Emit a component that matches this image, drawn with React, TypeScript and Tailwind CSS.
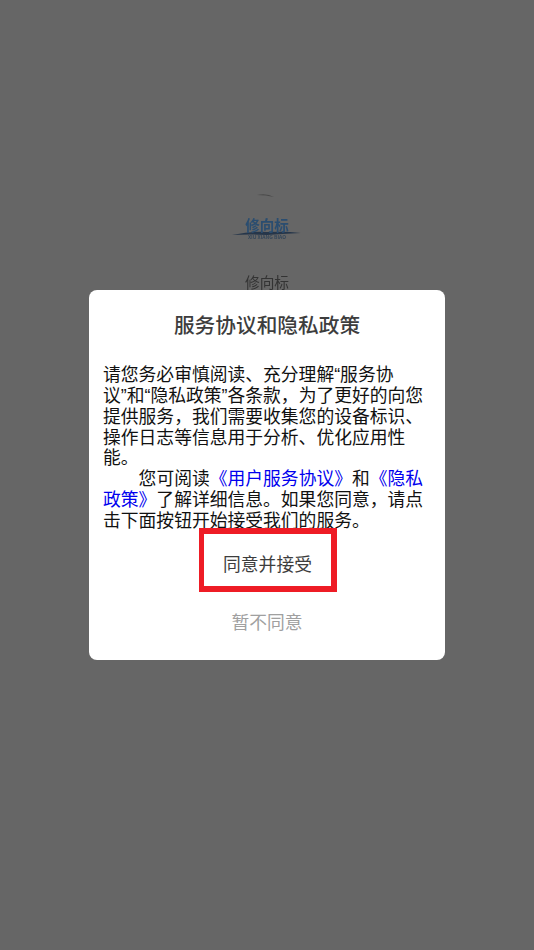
const Q = ({ children }: { children: string }) => (
  <span className="font-['Liberation_Sans']">{children}</span>
);

const Line = ({ children }: { children: React.ReactNode }) => (
  <span className="block h-[20.85px] leading-[20.85px]">{children}</span>
);

export default function App() {
  return (
    <div
      className="relative h-[950px] w-[534px] overflow-hidden bg-[#666666]"
      style={{ fontFamily: '"Noto Sans CJK SC", "Liberation Sans", sans-serif' }}
    >
      {/* Dimmed splash content */}
      <div className="flex flex-col items-center pt-[192px]">
        <svg width="72" height="50" viewBox="0 0 72 50" className="blur-[0.5px]">
          <path d="M26 3 Q36 1 43 5 Q35 3 26 3Z" fill="#4a4a4a" />
          <path d="M1 43 Q20 39 36 40 Q54 39 70 41 Q50 42 36 43 Q18 42 1 43Z" fill="#26364a" />
        </svg>
        <span className="mt-[-25px] text-[14.5px] font-bold leading-[15px] text-[#2a4d70] blur-[0.7px]">修向标</span>
        <span className="mt-[2px] text-[5px] font-bold leading-[5px] text-[#35475a] blur-[0.4px]">XIU XIANG BIAO</span>
        <span className="mt-[33px] text-[14.7px] leading-[20px] text-[#333333] blur-[0.3px]">修向标</span>
      </div>

      {/* Dialog */}
      <div className="absolute left-[89px] top-[290px] flex h-[370px] w-[356px] flex-col items-center rounded-lg bg-white px-[14px]">
        <h1 className="mt-[20px] text-[20.7px] font-medium leading-[28px] text-[#3d3d3d]">服务协议和隐私政策</h1>
        <div className="mt-[25px] h-[165px] w-full whitespace-nowrap text-[17.8px] text-[#111111]">
          <Line>
            请您务必审慎阅读、充分理解<Q>“</Q>服务协
          </Line>
          <Line>
            议<Q>”</Q>和<Q>“</Q>隐私政策<Q>”</Q>各条款，为了更好的向您
          </Line>
          <Line>提供服务，我们需要收集您的设备标识、</Line>
          <Line>操作日志等信息用于分析、优化应用性</Line>
          <Line>能。</Line>
          <Line>
            <span className="pl-[35.6px]">您可阅读</span>
            <span className="text-[#0000ee]">《用户服务协议》</span>和<span className="text-[#0000ee]">《隐私</span>
          </Line>
          <Line>
            <span className="text-[#0000ee]">政策》</span>了解详细信息。如果您同意，请点
          </Line>
          <Line>击下面按钮开始接受我们的服务。</Line>
        </div>
        <button className="ml-[2px] flex h-[64px] w-[138px] items-center justify-center border-y-[6px] border-l-[5px] border-r-[6px] border-[#ee1c25] pt-[7px] text-[17.8px] text-[#3d3d3d]">
          同意并接受
        </button>
        <button className="mt-[16px] text-[17.8px] leading-[26px] text-[#a0a0a0]">暂不同意</button>
      </div>
    </div>
  );
}
